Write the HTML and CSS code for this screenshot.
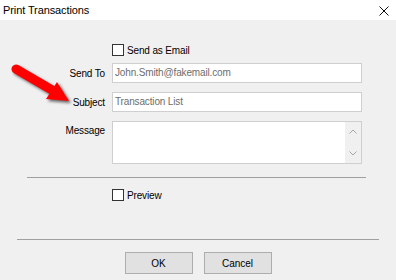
FILE: index.html
```html
<!DOCTYPE html>
<html lang="en">
<head>
    <meta charset="UTF-8">
    <title>Print Transactions</title>
    <link rel="stylesheet" href="styles.css">
</head>
<body>
    <div class="dialog">
        <div class="titlebar">
            <span class="title">Print Transactions</span>
            <svg class="close" width="10" height="10" viewBox="0 0 10 10">
                <path d="M0.5 0.5 L9.5 9.5 M9.5 0.5 L0.5 9.5" stroke="#111" stroke-width="1" fill="none"/>
            </svg>
        </div>
        <div class="content">
            <div class="form">
                <span></span>
                <div class="check-row">
                    <span class="box"></span>
                    <span>Send as Email</span>
                </div>

                <label class="lbl">Send To</label>
                <div class="field">John.Smith@fakemail.com</div>

                <label class="lbl">Subject</label>
                <div class="field">Transaction List</div>

                <label class="lbl top">Message</label>
                <div class="field memo">
                    <div class="scroll">
                        <svg width="8" height="5" viewBox="0 0 8 5"><path d="M0.5 4.5 L4 1 L7.5 4.5" stroke="#a6a6a6" fill="none"/></svg>
                        <svg width="8" height="5" viewBox="0 0 8 5"><path d="M0.5 0.5 L4 4 L7.5 0.5" stroke="#a6a6a6" fill="none"/></svg>
                    </div>
                </div>
            </div>

            <div class="sep short"></div>

            <div class="check-row preview">
                <span class="box"></span>
                <span>Preview</span>
            </div>

            <div class="sep long"></div>

            <div class="buttons">
                <button class="btn">OK</button>
                <button class="btn">Cancel</button>
            </div>
        </div>

        <!-- red annotation arrow pointing at Subject -->
        <svg class="arrow" width="80" height="110" viewBox="0 0 80 110">
            <g class="arrow-shape">
                <path d="M16 69 L52 90" stroke="#ff0000" stroke-width="9" stroke-linecap="round"/>
                <polygon points="46,99 57,82 69,101" fill="#ff0000"/>
            </g>
        </svg>
    </div>
</body>
</html>
```

FILE: styles.css
```css
body {
    margin: 0;
    background-color: #f0f0f0;
    font-family: 'Liberation Sans', Arial, sans-serif;
    font-size: 10px;
    color: #000;
}

.dialog {
    position: relative;
    width: 396px;
    height: 280px;
    background-color: #f0f0f0;
    overflow: hidden;
}

.titlebar {
    height: 20px;
    background-color: #fff;
    display: flex;
    align-items: center;
    justify-content: space-between;
    padding: 0 7px 0 3px;
}

.title {
    font-size: 11px;
    letter-spacing: -0.1px;
    margin-top: -1px;
}

.close {
    margin-top: 1px;
}

.content {
    padding-top: 24px;
}

.form {
    display: grid;
    grid-template-columns: 105px 250px;
    column-gap: 7px;
    row-gap: 9px;
    grid-template-rows: 10px 20px 20px 43px;
}

.check-row {
    display: flex;
    align-items: center;
    gap: 3px;
    height: 12px;
    letter-spacing: -0.15px;
}

.box {
    width: 12px;
    height: 12px;
    box-sizing: border-box;
    border: 1px solid #333;
    background-color: #fff;
}

.lbl {
    text-align: right;
    align-self: center;
    letter-spacing: -0.15px;
}

.lbl.top {
    align-self: start;
    padding-top: 4px;
}

.field {
    box-sizing: border-box;
    height: 20px;
    border: 1px solid #cfcfcf;
    background-color: #fff;
    color: #6d6d6d;
    padding-left: 2px;
    line-height: 18px;
    letter-spacing: -0.15px;
}

.field.memo {
    height: 43px;
    display: flex;
    justify-content: flex-end;
}

.scroll {
    width: 16px;
    background-color: #f0f0f0;
    display: flex;
    flex-direction: column;
    justify-content: space-between;
    align-items: center;
    padding: 7px 0 7px;
}

.scroll svg {
    display: block;
}

.sep {
    height: 1px;
    background-color: #a0a0a0;
}

.sep.short {
    margin: 13px 30px 0 27px;
}

.sep.long {
    margin: 38px 17px 0 17px;
}

.preview {
    margin: 11px 0 0 112px;
}

.buttons {
    display: flex;
    justify-content: center;
    gap: 11px;
    margin-top: 12px;
}

.btn {
    width: 68px;
    height: 22px;
    border: 1px solid #adadad;
    background-color: #e1e1e1;
    font-family: 'Liberation Sans', Arial, sans-serif;
    font-size: 10px;
    color: #000;
    padding: 0;
}

.arrow {
    position: absolute;
    left: 0;
    top: 0;
}

.arrow-shape {
    filter: drop-shadow(2px 2px 1.5px rgba(0, 0, 0, 0.6));
}
```
